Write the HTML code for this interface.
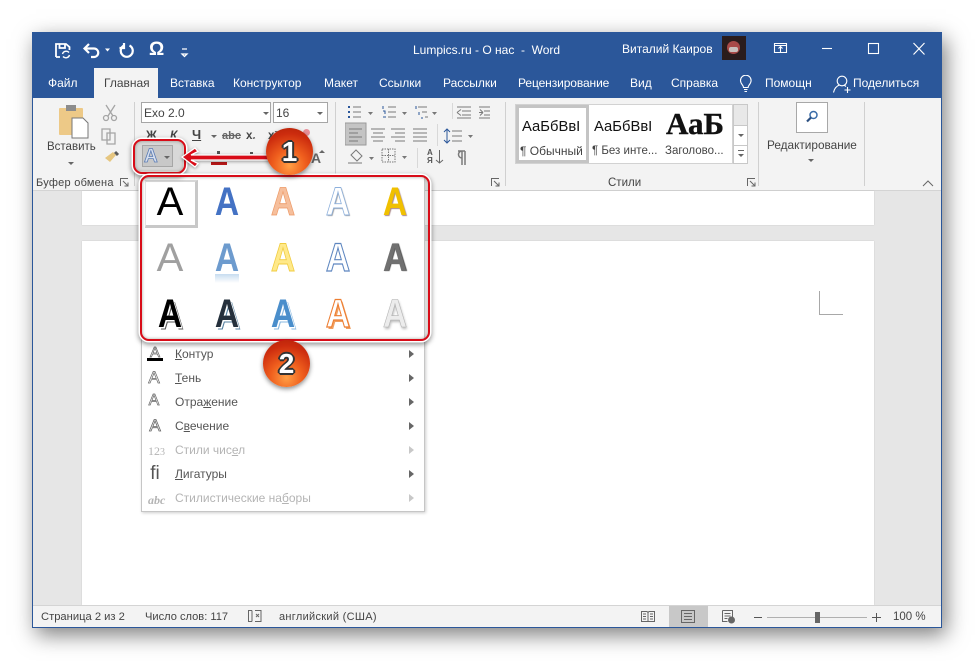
<!DOCTYPE html>
<html><head><meta charset="utf-8">
<style>
html,body{margin:0;padding:0;width:975px;height:661px;overflow:hidden;background:#fff}
body{font-family:"Liberation Sans",sans-serif;color:#444;font-size:12px}
#p{position:absolute;left:0;top:0;width:975px;height:661px;filter:blur(.3px)}
#p div{position:absolute;white-space:nowrap}
.w{color:#fff;font-size:12px;line-height:14px}
.r{font-size:11.5px;line-height:14px;color:#444}
.A{font-size:40px;line-height:40px;width:50px;text-align:center;transform:translate(-25px,-20px)}
.b{font-weight:bold;transform:translate(-25px,-20px) scaleX(.84)}
.m{font-size:12px;line-height:14px;color:#555;left:175px}
.m u{text-decoration:underline}
.d{color:#b4b4b4}
.arr{left:409px;width:0;height:0;border-left:5px solid #666;border-top:4px solid transparent;border-bottom:4px solid transparent}
.arr.g{border-left-color:#c8c8c8}
.ic{font-size:16px;left:147px;line-height:18px;color:#666;width:14px;text-align:center}
.tri{width:0;height:0;border-top:3px solid #666;border-left:3px solid transparent;border-right:3px solid transparent}
.sep{width:1px;background:#d0d0d0;top:102px;height:84px}
.num{width:47px;height:47px;border-radius:50%;background:radial-gradient(circle at 50% 80%,#ff9f45 0,#f0601e 35%,#cc2c0e 72%,#b02008 100%);box-shadow:0 2px 5px rgba(0,0,0,.45);color:#fff;font-weight:bold;font-size:28px;line-height:47px;text-align:center;text-shadow:-2px 0 0 #333,2px 0 0 #333,0 -2px 0 #333,0 2px 0 #333,-1px -1px 0 #333,1px 1px 0 #333,-1px 1px 0 #333,1px -1px 0 #333}
.rb{border:2.5px solid #d80c18;border-radius:9px;box-shadow:0 0 0 1.5px #fff,0 2px 5px 2px rgba(0,0,0,.38),inset 0 0 3px rgba(60,60,40,.45);box-sizing:border-box}
</style></head><body><div id="p">

<!-- window -->
<div style="left:32px;top:32px;width:910px;height:596px;background:#e6e6e6;box-shadow:4px 7px 20px rgba(0,0,0,.5)"></div>
<div style="left:32px;top:32px;width:910px;height:66px;background:#2b579a"></div>
<div style="left:33px;top:98px;width:908px;height:92px;background:#f3f3f3;border-bottom:1px solid #d4d4d4"></div>
<!-- pages -->
<div style="left:82px;top:191px;width:792px;height:34px;background:#fff;box-shadow:0 0 1px #bbb"></div>
<div style="left:82px;top:241px;width:792px;height:364px;background:#fff;box-shadow:0 0 1px #bbb"></div>
<div style="left:819px;top:291px;width:1px;height:23px;background:#a8a8a8"></div>
<div style="left:819px;top:314px;width:24px;height:1px;background:#a8a8a8"></div>
<!-- status -->
<div style="left:33px;top:605px;width:908px;height:22px;background:#f3f3f3;border-top:1px solid #d4d4d4;box-sizing:border-box"></div>
<div style="left:32px;top:627px;width:910px;height:1px;background:#2b579a"></div>
<div style="left:32px;top:98px;width:1px;height:530px;background:#2b579a"></div>
<div style="left:941px;top:98px;width:1px;height:530px;background:#2b579a"></div>

<!-- quick access -->
<svg style="position:absolute;left:50px;top:38px" width="150" height="24" viewBox="0 0 150 24" fill="none" stroke="#fff" stroke-width="1.8">
<path d="M6 19V6h10l3.500 3v3M9.500 6v4h5.500V6M6 19h4"/><path d="M12.500 16a3.800 3.800 0 0 1 6.500-1.500M19.500 17a3.800 3.800 0 0 1-6.500 1.500" stroke-width="1.400"/>
<path d="M39 6l-4.500 4.500 4.500 4.500M35 10.500h9a4 4 0 0 1 0 8.500h-3" stroke-width="2.200"/>
<path d="M55 10.500h5l-2.500 3z" fill="#fff" stroke="none"/>
<path d="M74 7.500a6 6 0 1 0 5.500 0M74 5v5h-4.500" stroke-width="2.200"/>
<path d="M132 11h5M132 16l2.500 2.500 2.500-2.500z" stroke-width="1.300"/>
</svg>
<div style="left:149px;top:40px;font-size:19px;line-height:20px;color:#fff;font-weight:bold">Ω</div>
<div class="w" style="left:413px;top:43px">Lumpics.ru - О нас&nbsp; -&nbsp; Word</div>
<div class="w" style="left:622px;top:42px">Виталий Каиров</div>
<div style="left:722px;top:36px;width:24px;height:24px;background:#2a1c1c"></div>
<div style="left:727px;top:41px;width:13px;height:13px;border-radius:50%;background:#a84a48"></div>
<div style="left:729px;top:47px;width:9px;height:5px;border-radius:2px;background:#c9c0bc"></div>
<svg style="position:absolute;left:770px;top:36px" width="165" height="26" viewBox="0 0 165 26" fill="none" stroke="#fff" stroke-width="1.100">
<path d="M4.500 7.500h12v9h-12zM4.500 9.500h12M10.500 16v-5M8.500 12.500l2-2 2 2"/>
<path d="M52 12.500h10"/>
<rect x="98.500" y="7.500" width="10" height="10"/>
<path d="M143.500 7l11 11.500M154.500 7l-11 11.500" stroke-width="1.200"/>
</svg>

<!-- tabs -->
<div style="left:94px;top:68px;width:64px;height:30px;background:#f3f3f3"></div>
<div class="w" style="left:48px;top:76px">Файл</div>
<div class="w" style="left:104px;top:76px;color:#444">Главная</div>
<div class="w" style="left:170px;top:76px">Вставка</div>
<div class="w" style="left:233px;top:76px">Конструктор</div>
<div class="w" style="left:324px;top:76px">Макет</div>
<div class="w" style="left:379px;top:76px">Ссылки</div>
<div class="w" style="left:443px;top:76px">Рассылки</div>
<div class="w" style="left:518px;top:76px;letter-spacing:-.1px">Рецензирование</div>
<div class="w" style="left:630px;top:76px">Вид</div>
<div class="w" style="left:671px;top:76px">Справка</div>
<svg style="position:absolute;left:738px;top:75px" width="16" height="18" viewBox="0 0 16 18" fill="none" stroke="#fff" stroke-width="1.100"><path d="M5.500 12.500c0-2.500-3-3.500-3-7a5.300 5.300 0 0 1 10.600 0c0 3.500-3 4.500-3 7zM6 14.500h3.500M6.500 16.500h2.500"/></svg>
<div class="w" style="left:765px;top:76px">Помощн</div>
<svg style="position:absolute;left:832px;top:73px" width="22" height="21" viewBox="0 0 22 21" fill="none" stroke="#fff" stroke-width="1.100"><circle cx="10" cy="8" r="4.800"/><path d="M1.500 19.500c1-4.500 3-6.500 6-7.500M12 12l2 1.500M15.500 14v6M12.500 17h6"/></svg>
<div class="w" style="left:853px;top:76px">Поделиться</div>

<!-- clipboard -->
<svg style="position:absolute;left:56px;top:103px" width="36" height="36" viewBox="0 0 36 36">
<rect x="3" y="5" width="24" height="27" rx="1" fill="#edc987"/><rect x="10" y="2" width="10" height="6" fill="#8c8c8c"/>
<path d="M16 15h11l5 5v15H16z" fill="#fff" stroke="#777"/></svg>
<div class="r" style="left:47px;top:140px;font-size:11.500px">Вставить</div>
<div class="tri" style="left:68px;top:162px"></div>
<svg style="position:absolute;left:100px;top:103px" width="20" height="62" viewBox="0 0 20 62" fill="none" stroke="#a5a5a5" stroke-width="1.300">
<path d="M6 2l7 11M15 2L8 13"/><circle cx="6" cy="15" r="2.500"/><circle cx="14" cy="15" r="2.500"/>
<path d="M2 26h8v11H2zM7 30h8v11H7z"/>
<path d="M15 49l3 3" stroke="#5a5a5a" stroke-width="3"/><path d="M5 55l8-6 3 3-6 7z" fill="#e6c680" stroke="none"/>
</svg>
<div class="r" style="left:36px;top:176px;font-size:11px;letter-spacing:.25px">Буфер обмена</div>
<svg style="position:absolute;left:120px;top:178px" width="9" height="9" fill="none" stroke="#666"><path d="M.5 8V.5H8M3 3l5 5M8 4.500V8H4.500"/></svg>
<div class="sep" style="left:134px"></div>

<!-- font -->
<div style="left:141px;top:102px;width:130px;height:21px;background:#fff;border:1px solid #a6a6a6;box-sizing:border-box"></div>
<div style="left:273px;top:102px;width:55px;height:21px;background:#fff;border:1px solid #a6a6a6;box-sizing:border-box"></div>
<div class="r" style="left:144px;top:106px;font-size:12px">Exo 2.0</div>
<div class="r" style="left:276px;top:106px;font-size:12px">16</div>
<div class="tri" style="left:263px;top:112px"></div>
<div class="tri" style="left:317px;top:112px"></div>
<div class="r" style="left:146px;top:128px;font-weight:bold;font-size:12px">Ж</div>
<div class="r" style="left:170px;top:128px;font-weight:bold;font-style:italic;font-size:12px">К</div>
<div class="r" style="left:192px;top:128px;font-weight:bold;font-size:13px;text-decoration:underline">Ч</div>
<div class="tri" style="left:211px;top:135px"></div>
<div class="r" style="left:222px;top:129px;font-size:11px;text-decoration:line-through;font-weight:bold;color:#666">abc</div>
<div class="r" style="left:246px;top:129px;font-weight:bold">x<span style="font-size:7px">₂</span></div>
<div class="r" style="left:268px;top:129px;font-weight:bold">x²</div>
<div style="left:303px;top:129px;width:7px;height:7px;border-radius:50%;background:#e8909a"></div>
<div style="left:177px;top:160px;width:5px;height:5px;background:#f0c830"></div>
<div style="left:217px;top:151px;width:3px;height:3px;background:#555"></div>
<div style="left:250px;top:152px;width:3px;height:2px;background:#555"></div>
<div style="left:211px;top:162px;width:16px;height:3px;background:#b81818"></div>
<div class="r" style="left:311px;top:151px;font-size:14px;font-weight:bold;color:#666">A</div>
<div class="tri" style="left:319px;top:150px;border-top:0;border-bottom:3px solid #666"></div>

<!-- paragraph -->
<div class="sep" style="left:335px"></div>
<svg style="position:absolute;left:345px;top:103px" width="145" height="66" viewBox="0 0 145 66" fill="none" stroke="#7a7a7a" stroke-width="1">
<path d="M3 4h2M3 9h2M3 14h2" stroke="#2b579a" stroke-width="2"/><path d="M8 4h8M8 9h8M8 14h8"/><path d="M23 9h5l-2.500 3z" fill="#777" stroke="none"/>
<path d="M38 3v3M38 8h2v3M38 14h3" stroke="#2b579a"/><path d="M43 4h8M43 9h8M43 14h8"/><path d="M57 9h5l-2.500 3z" fill="#777" stroke="none"/>
<path d="M71 3v3M74 9v3M77 14v2" stroke="#2b579a"/><path d="M73 4h9M77 9h5M80 14h3"/><path d="M87 9h5l-2.500 3z" fill="#777" stroke="none"/>
<path d="M112 4h14M117 8h9M117 12h9M112 15h14M112 9.500l4-3M112 9.500l4 3" />
<path d="M134 4h14M139 8h9M139 12h9M134 15h14M138 9.500h-4M138 9.500l-3-3M138 9.500l-3 3"/>
<rect x="0" y="20" width="21" height="22" fill="#c4c4c4" stroke="#9a9a9a"/>
<path d="M4 26h13M4 30h9M4 34h13M4 38h9"/>
<path d="M26 26h14M28 30h10M26 34h14M28 38h10"/>
<path d="M46 26h14M50 30h10M46 34h14M50 38h10"/>
<path d="M68 26h14M68 30h14M68 34h14M68 38h14"/>
<path d="M102 26v14M99 29l3-3 3 3M99 37l3 3 3-3" stroke="#2b579a"/><path d="M107 28h10M107 33h10M107 38h10"/><path d="M123 32h5l-2.500 3z" fill="#777" stroke="none"/>
<path d="M6 52l5-5 6 6-5 5zM3 60h14"/><path d="M24 54h5l-2.500 3z" fill="#777" stroke="none"/>
<rect x="37" y="46" width="13" height="13" stroke-dasharray="1.500 1"/><path d="M43.500 46v13M37 52.500h13" stroke-dasharray="1.500 1"/><path d="M57 53h5l-2.500 3z" fill="#777" stroke="none"/>
<path d="M113 48h7M117 48v14M120 48v14M117 55a3.500 3.500 0 0 1 0-7" stroke-width="1.500"/>
</svg>
<svg style="position:absolute;left:435px;top:149px" width="9" height="16" fill="none" stroke="#666"><path d="M4.500 1v13M1 11l3.500 3L8 11"/></svg>
<div class="r" style="left:427px;top:149px;font-size:8px;line-height:8px;color:#555;font-weight:bold">А<br>Я</div>
<div style="left:452px;top:103px;width:1px;height:16px;background:#d8d8d8"></div>
<div style="left:437px;top:124px;width:1px;height:22px;background:#d8d8d8"></div>
<div style="left:417px;top:148px;width:1px;height:20px;background:#d8d8d8"></div>
<svg style="position:absolute;left:491px;top:178px" width="9" height="9" fill="none" stroke="#666"><path d="M.5 8V.5H8M3 3l5 5M8 4.500V8H4.500"/></svg>
<div class="sep" style="left:505px"></div>

<!-- styles -->
<div style="left:515px;top:104px;width:218px;height:60px;background:#fff;border:1px solid #d2d2d2;box-sizing:border-box"></div>
<div style="left:516px;top:105px;width:73px;height:58px;box-sizing:border-box;border:3px solid #c4c4c4"></div>
<div style="left:522px;top:119px;font-size:14.800px;color:#111;line-height:16px">АаБбВвI</div>
<div style="left:594px;top:119px;font-size:14.800px;color:#111;line-height:16px">АаБбВвI</div>
<div style="left:666px;top:107px;font-family:'Liberation Serif',serif;font-weight:bold;font-size:31px;line-height:34px;color:#111;-webkit-text-stroke:.4px #111">АаБ</div>
<div class="r" style="left:520px;top:144px;font-size:12px">¶ Обычный</div>
<div class="r" style="left:592px;top:144px;font-size:11.500px">¶ Без инте...</div>
<div class="r" style="left:665px;top:144px;font-size:11.500px">Заголово...</div>
<div style="left:733px;top:104px;width:15px;height:60px;background:#fff;border:1px solid #c8c8c8;box-sizing:border-box"></div>
<div style="left:734px;top:105px;width:13px;height:21px;background:#e8e8e8"></div>
<div style="left:733px;top:145px;width:15px;height:1px;background:#c8c8c8"></div>
<div style="left:733px;top:125px;width:15px;height:1px;background:#c8c8c8"></div>
<div class="tri" style="left:738px;top:134px"></div>
<div class="tri" style="left:738px;top:154px"></div>
<div style="left:738px;top:150px;width:6px;height:1px;background:#666"></div>
<div class="r" style="left:608px;top:176px">Стили</div>
<svg style="position:absolute;left:747px;top:178px" width="9" height="9" fill="none" stroke="#666"><path d="M.5 8V.5H8M3 3l5 5M8 4.500V8H4.500"/></svg>
<div class="sep" style="left:758px"></div>

<!-- editing -->
<div style="left:796px;top:102px;width:32px;height:31px;background:#fff;border:1px solid #a8a8a8;box-sizing:border-box"></div>
<svg style="position:absolute;left:804px;top:109px" width="16" height="16" fill="none"><circle cx="9.500" cy="6" r="3.500" stroke="#3a6ca8" stroke-width="1.500"/><path d="M7 8.500l-4 4" stroke="#2b4f80" stroke-width="2.200"/></svg>
<div class="r" style="left:767px;top:138px;font-size:11.800px">Редактирование</div>
<div class="tri" style="left:808px;top:159px"></div>
<div class="sep" style="left:864px"></div>
<svg style="position:absolute;left:922px;top:180px" width="12" height="7" fill="none" stroke="#666"><path d="M1 6l5-5 5 5"/></svg>

<!-- highlighted text effect button -->
<div style="left:135px;top:141px;width:48px;height:30px;background:#d8d8d8"></div>
<div style="left:142px;top:145px;width:31px;height:22px;background:#c8c8c8;border:1px solid #a6a6a6;box-sizing:border-box"></div>
<div style="left:144px;top:146px;font-size:19px;line-height:21px;color:#d8e0ee;-webkit-text-stroke:.8px #5b7cb4;font-weight:bold">A</div>
<div class="tri" style="left:164px;top:156px"></div>

<!-- menu -->
<div style="left:141px;top:175px;width:284px;height:337px;background:#fff;border:1px solid #c6c6c6;box-sizing:border-box;box-shadow:1px 1px 3px rgba(0,0,0,.2)"></div>
<div style="left:145px;top:180px;width:53px;height:48px;background:#fff;border-right:3px solid #c8c8c8;border-bottom:3px solid #c8c8c8;border-top:2px solid #d8d8d8;border-left:1px solid #e4e4e4;box-sizing:border-box"></div>

<!-- A gallery -->
<div class="A" style="left:170px;top:202px;color:#000;">A</div>
<div class="A b" style="left:227px;top:202px;color:#4472c4">A</div>
<div class="A b" style="left:283px;top:202px;color:#f6bf9c;-webkit-text-stroke:.8px #ed9a68">A</div>
<div class="A b" style="left:338px;top:202px;color:#fff;-webkit-text-stroke:.9px #8db0dc;text-shadow:1px 1px 1px #999">A</div>
<div class="A b" style="left:395px;top:202px;color:#f0c000;text-shadow:1px 1px 1px #a88">A</div>

<div class="A" style="left:170px;top:258px;color:#a0a0a0;">A</div>
<div class="A b" style="left:227px;top:258px;color:#6d9bce">A</div>
<div class="A b" style="left:283px;top:258px;color:#ffe98a;-webkit-text-stroke:.9px #f0cc40">A</div>
<div class="A b" style="left:338px;top:258px;color:#fff;-webkit-text-stroke:1.200px #5f87c0">A</div>
<div class="A b" style="left:395px;top:258px;color:#707070;text-shadow:1px 0 1px #444">A</div>
<div style="left:215px;top:274px;width:24px;height:9px;background:linear-gradient(#c7dcf0,#fff)"></div>

<div class="A b" style="left:170px;top:314px;color:#000;text-shadow:1.500px 1.500px 0 #fff,2.500px 2.500px 0 #555">A</div>
<div class="A b" style="left:227px;top:314px;color:#25303c;text-shadow:1.500px 1.500px 0 #fff,2.500px 2.500px 0 #5580a0">A</div>
<div class="A b" style="left:283px;top:314px;color:#4a8ecb;text-shadow:1.500px 1.500px 0 #fff,2.500px 2.500px 0 #88b8e0">A</div>
<div class="A b" style="left:338px;top:314px;color:#fff;-webkit-text-stroke:1.200px #ed7d31;text-shadow:2px 2px 0 #f0a060">A</div>
<div class="A b" style="left:395px;top:314px;color:#ececec;-webkit-text-stroke:.6px #b0b0b0;text-shadow:1px 2px 3px #bbb">A</div>

<!-- menu items -->
<div class="ic" style="top:344px;font-size:15px;color:#fff;-webkit-text-stroke:.7px #666;left:148px">A</div>
<div style="left:147px;top:358px;width:16px;height:3px;background:#000"></div>
<div class="ic" style="top:369px;color:#fff;-webkit-text-stroke:.7px #666;font-size:17px;left:147px">A</div>
<div class="ic" style="top:392px;color:#fff;-webkit-text-stroke:.7px #666;font-size:16px;left:147px">A</div>
<div class="ic" style="top:417px;color:#fff;-webkit-text-stroke:.8px #666;font-size:17px;left:148px">A</div>
<div class="ic" style="top:442px;color:#b4b4b4;font-family:'Liberation Serif',serif;font-size:12px;left:148px">12<span style="font-size:10px">3</span></div>
<div class="ic" style="top:465px;color:#555;font-size:19px;left:148px">fi</div>
<div class="ic" style="top:491px;color:#b4b4b4;font-family:'Liberation Serif',serif;font-size:12px;font-style:italic;font-weight:bold;left:148px">abc</div>

<div class="m" style="top:347px"><u>К</u>онтур</div>
<div class="m" style="top:371px"><u>Т</u>ень</div>
<div class="m" style="top:395px">Отра<u>ж</u>ение</div>
<div class="m" style="top:419px">С<u>в</u>ечение</div>
<div class="m d" style="top:443px">Стили чис<u>е</u>л</div>
<div class="m" style="top:467px"><u>Л</u>игатуры</div>
<div class="m d" style="top:491px">Стилистические на<u>б</u>оры</div>
<div class="arr" style="top:350px"></div>
<div class="arr" style="top:374px"></div>
<div class="arr" style="top:398px"></div>
<div class="arr" style="top:422px"></div>
<div class="arr g" style="top:446px"></div>
<div class="arr" style="top:470px"></div>
<div class="arr g" style="top:494px"></div>

<!-- annotations -->
<div class="rb" style="left:133px;top:139px;width:53px;height:35px"></div>
<div class="rb" style="left:140px;top:175px;width:290px;height:166px"></div>
<svg style="position:absolute;left:176px;top:143px;overflow:visible;filter:drop-shadow(0 1px 1.500px rgba(0,0,0,.4))" width="100" height="28" viewBox="0 0 100 28">
<path d="M6 14l13-9 3 3.500-7 3.500h85v5H15l7 3.500-3 3.500z" fill="#d80c18" stroke="#fff" stroke-width="1.300"/>
</svg>
<div class="num" style="left:266px;top:128px">1</div>
<div class="num" style="left:263px;top:340px">2</div>

<!-- status text -->
<div class="r" style="left:41px;top:610px;font-size:11.200px">Страница 2 из 2</div>
<div class="r" style="left:145px;top:610px;font-size:11.100px">Число слов: 117</div>
<svg style="position:absolute;left:247px;top:609px" width="16" height="15" fill="none" stroke="#666"><path d="M5 1.500H1.500v11H5M5 1.500v11M8 1.500h6v11H8M9 5l3 3M12 5l-3 3"/></svg>
<div class="r" style="left:279px;top:610px;font-size:11px;letter-spacing:.3px">английский (США)</div>
<svg style="position:absolute;left:640px;top:609px" width="16" height="15" fill="none" stroke="#666"><path d="M1.500 2.500h5.500l1 1 1-1h5.500v10H1.500zM8 3.500v9M3 5h3M3 7.500h3M3 10h3M10 5h3M10 7.500h3M10 10h3"/></svg>
<div style="left:669px;top:606px;width:39px;height:21px;background:#c8c8c8"></div>
<svg style="position:absolute;left:680px;top:609px" width="16" height="15" fill="none" stroke="#666"><path d="M1.500 1.500h13v12h-13zM4 4.500h8M4 7.500h8M4 10.500h8"/></svg>
<svg style="position:absolute;left:720px;top:609px" width="16" height="15" fill="none" stroke="#666"><path d="M2.500 1.500h10v7M2.500 1.500v11h5M4.500 4.500h6M4.500 7h6M4.500 9.500h3"/><circle cx="11.500" cy="11" r="3.500" fill="#666" stroke="none"/></svg>
<div style="left:754px;top:617px;width:8px;height:1px;background:#555"></div>
<div style="left:767px;top:617px;width:100px;height:1px;background:#b0b0b0"></div>
<div style="left:815px;top:612px;width:5px;height:11px;background:#666"></div>
<div style="left:872px;top:617px;width:9px;height:1px;background:#555"></div>
<div style="left:876px;top:613px;width:1px;height:9px;background:#555"></div>
<div class="r" style="left:893px;top:610px;font-size:11.500px">100 %</div>

</div></body></html>
